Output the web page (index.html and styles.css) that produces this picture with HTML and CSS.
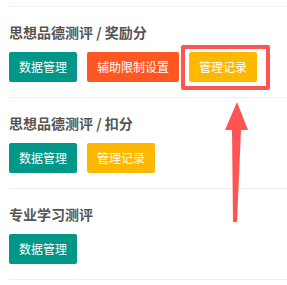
FILE: index.html
```
<!DOCTYPE html>
<html lang="zh-CN">

<head>
    <meta charset="UTF-8">
    <meta name="viewport" content="width=device-width, initial-scale=1.0">
    <title>测评管理</title>
    <link rel="stylesheet" href="styles.css">
</head>

<body>
    <div class="panel">
        <div class="section">
            <h3 class="section-title">思想品德测评 / 奖励分</h3>
            <div class="btn-row">
                <button class="btn btn-green">数据管理</button>
                <button class="btn btn-danger">辅助限制设置</button>
                <span class="mark">
                    <button class="btn btn-warm">管理记录</button>
                </span>
            </div>
        </div>
        <div class="section">
            <h3 class="section-title">思想品德测评 / 扣分</h3>
            <div class="btn-row">
                <button class="btn btn-green">数据管理</button>
                <button class="btn btn-warm">管理记录</button>
            </div>
        </div>
        <div class="section">
            <h3 class="section-title">专业学习测评</h3>
            <div class="btn-row">
                <button class="btn btn-green">数据管理</button>
            </div>
        </div>
    </div>

    <!-- annotation arrow pointing at the highlighted button -->
    <svg class="arrow" width="32" height="128" viewBox="0 0 32 128">
        <polygon points="17,4 5,32 12,32 13,124 17,124 21,32 28,32" fill="#ff5454" />
    </svg>
</body>

</html>
```

FILE: styles.css
```
body {
    margin: 0;
    padding: 0;
    background-color: #fff;
    font-family: "Noto Sans CJK SC", "Noto Sans", sans-serif;
    position: relative;
}

.panel {
    padding: 6px 0 0 9px;
}

.section {
    border-top: 1px solid #eee;
    padding: 15px 0;
}

.section:last-child {
    border-bottom: 1px solid #eee;
}

.section-title {
    margin: 0 0 10px 0;
    font-size: 14px;
    line-height: 20px;
    font-weight: bold;
    color: #555;
}

.btn-row {
    display: flex;
    gap: 10px;
}

.btn {
    height: 30px;
    line-height: 30px;
    padding: 0 10px;
    border: none;
    border-radius: 2px;
    font-family: "Noto Sans CJK SC", "Noto Sans", sans-serif;
    font-size: 12px;
    color: #fff;
    cursor: pointer;
}

.btn-green {
    background-color: #009688;
}

.btn-danger {
    background-color: #ff5722;
}

.btn-warm {
    background-color: #ffb800;
}

.mark {
    position: relative;
    display: flex;
}

.mark::after {
    content: "";
    position: absolute;
    left: -8px;
    top: -7px;
    right: -13px;
    bottom: -8px;
    border: 4px solid #ff5454;
    border-radius: 2px;
}

.arrow {
    position: absolute;
    left: 220px;
    top: 98px;
}
```
